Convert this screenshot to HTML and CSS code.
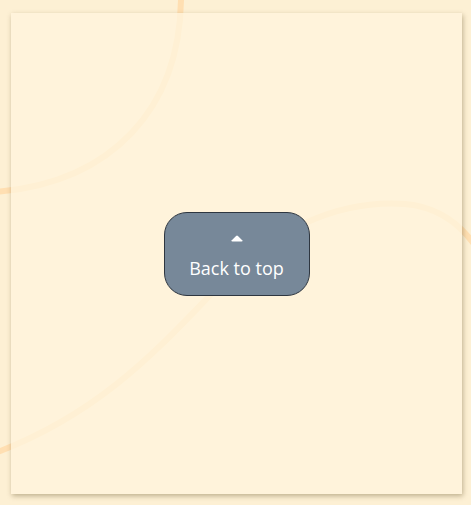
FILE: index.html
```html
<!DOCTYPE html>
<html lang="en">
<head>
<meta charset="utf-8">
<title>Back to top</title>
<link rel="stylesheet" href="styles.css">
</head>
<body>
<svg class="decor" width="471" height="505" viewBox="0 0 471 505" aria-hidden="true">
  <path d="M181,-10 C183,110 110,183 -5,192" />
  <path d="M-5,453 C110,410 170,335 225,280 C285,222 345,200 405,204 C440,207 462,225 478,250" />
</svg>
<main class="card">
  <button class="top-btn" type="button">
    <svg class="caret" width="12" height="7" viewBox="0 0 12 7" aria-hidden="true">
      <path d="M5.1,0.9 Q6,0 6.9,0.9 L11.2,5.3 Q12,6.5 10.5,6.5 L1.5,6.5 Q0,6.5 0.8,5.3 Z" />
    </svg>
    <span class="label">Back to top</span>
  </button>
</main>
</body>
</html>
```

FILE: styles.css
```css
html, body {
  margin: 0;
  padding: 0;
}
body {
  background: #fdf0d4;
  width: 471px;
  height: 505px;
  box-sizing: border-box;
  padding: 13px 9px 11px 11px;
  position: relative;
  overflow: hidden;
  font-family: "Open Sans", "Noto Sans", sans-serif;
}
.decor {
  position: absolute;
  left: 0;
  top: 0;
  z-index: 0;
}
.decor path {
  fill: none;
  stroke: #ffdfb2;
  stroke-width: 6;
  stroke-linecap: round;
}
.card {
  position: relative;
  z-index: 1;
  height: 100%;
  background: rgba(255, 244, 220, 0.8);
  box-shadow: 1px 2px 5px rgba(90, 70, 30, 0.38);
  display: flex;
  align-items: center;
  justify-content: center;
}
.top-btn {
  display: flex;
  flex-direction: column;
  align-items: center;
  width: 146px;
  box-sizing: border-box;
  padding: 22px 0 15px;
  background: #778899;
  border: 1px solid #2e3640;
  border-radius: 23px;
  color: #ffffff;
  font-family: "Open Sans", "Noto Sans", sans-serif;
  font-size: 18px;
  line-height: 24px;
  cursor: pointer;
}
.caret {
  display: block;
  fill: #ffffff;
  margin-bottom: 14px;
}
.label {
  display: block;
}
```
